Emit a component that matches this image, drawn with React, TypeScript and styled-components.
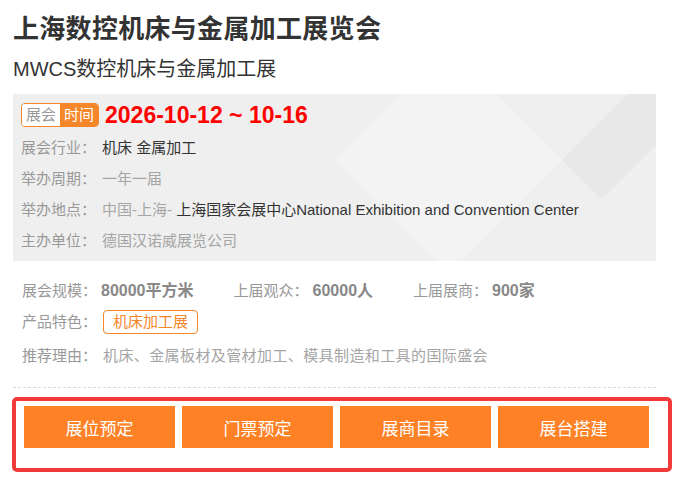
import styled, { createGlobalStyle } from "styled-components";

const GlobalStyle = createGlobalStyle`
  html, body {
    margin: 0;
    padding: 0;
    background: #fff;
  }
  body {
    font-family: "Liberation Sans", "Noto Sans CJK SC", sans-serif;
    color: #333;
  }
`;

const Page = styled.div`
  width: 673px;
  box-sizing: border-box;
  padding: 11px 17px 0 13px;
`;

const Title = styled.h1`
  margin: 0;
  font-size: 26px;
  line-height: 36px;
  font-weight: bold;
  letter-spacing: 0.3px;
  color: #333;
`;

const SubTitle = styled.h2`
  margin: 4px 0 0;
  font-size: 20px;
  line-height: 36px;
  font-weight: normal;
  color: #333;
`;

const InfoBox = styled.div`
  position: relative;
  overflow: hidden;
  margin-top: 7px;
  height: 167px;
  box-sizing: border-box;
  padding: 9px 0 5px 8px;
  background: #efefef;

  /* decorative diamonds of the backdrop */
  &::before {
    content: "";
    position: absolute;
    left: 356px;
    top: -14px;
    width: 160px;
    height: 160px;
    background: #f3f3f3;
    transform: rotate(45deg);
  }

  &::after {
    content: "";
    position: absolute;
    left: 549px;
    top: 66px;
    width: 180px;
    height: 56px;
    background: #e8e8e8;
    transform-origin: 0 0;
    transform: rotate(-45deg);
  }
`;

const DateRow = styled.div`
  position: relative;
  z-index: 1;
  display: flex;
  align-items: center;
  gap: 6px;
  height: 24px;
  margin-bottom: 5px;
`;

const Badge = styled.div`
  display: flex;
  height: 24px;
  box-sizing: border-box;
  border: 1px solid #f5862a;
  border-radius: 4px;
  overflow: hidden;
  font-size: 15px;
  line-height: 22px;
`;

const BadgePart = styled.span<{ $filled?: boolean }>`
  padding: 0 4px;
  background: ${(p) => (p.$filled ? "#f5862a" : "#fff")};
  color: ${(p) => (p.$filled ? "#fff" : "#999")};
`;

const DateText = styled.span`
  color: #ff0000;
  font-size: 23px;
  font-weight: bold;
  line-height: 24px;
`;

const Row = styled.div`
  position: relative;
  z-index: 1;
  height: 31px;
  line-height: 31px;
  font-size: 15px;
  white-space: nowrap;
`;

const Label = styled.span`
  display: inline-block;
  color: #999;
  margin-right: 6px;
`;

const Value = styled.span<{ $dark?: boolean }>`
  color: ${(p) => (p.$dark ? "#333" : "#a5a5a5")};
`;

const Details = styled.div`
  padding: 14px 0 0 9px;
`;

const Stat = styled.span`
  display: inline-block;
  margin-right: 40px;
`;

const StatLabel = styled(Label)`
  margin-right: 4px;
`;

const StatValue = styled.span`
  font-size: 16px;
  font-weight: bold;
  color: #888;
`;

const Tag = styled.span`
  display: inline-block;
  height: 24px;
  box-sizing: border-box;
  padding: 0 9px;
  border: 1px solid #f5862a;
  border-radius: 4px;
  color: #f5862a;
  font-size: 15px;
  line-height: 22px;
`;

const TagRow = styled(Row)`
  display: flex;
  align-items: center;
`;

const ReasonRow = styled(Row)`
  margin-top: 3px;
`;

const ReasonText = styled(Value)`
  letter-spacing: 0.4px;
`;

const Divider = styled.hr`
  margin: 16px 0 0;
  border: none;
  border-top: 1px dashed #d9d9d9;
`;

const ActionBar = styled.div`
  display: flex;
  gap: 7px;
  width: 660px;
  height: 75px;
  box-sizing: border-box;
  margin: 9px 0 0 -1px;
  padding: 5px 0 0 8px;
  border: 4px solid #f33a3a;
  border-radius: 5px;
`;

const ActionButton = styled.button`
  width: 151px;
  height: 42px;
  border: none;
  padding: 0;
  background: #fe8126;
  color: #fff;
  font-family: "Liberation Sans", "Noto Sans CJK SC", sans-serif;
  font-size: 17px;
  cursor: pointer;
`;

const infoRows = [
  { label: "展会行业：", parts: [{ text: "机床 金属加工", dark: true }] },
  { label: "举办周期：", parts: [{ text: "一年一届", dark: false }] },
  {
    label: "举办地点：",
    parts: [
      { text: "中国-上海- ", dark: false },
      {
        text: "上海国家会展中心National Exhibition and Convention Center",
        dark: true,
      },
    ],
  },
  { label: "主办单位：", parts: [{ text: "德国汉诺威展览公司", dark: false }] },
];

const stats = [
  { label: "展会规模：", value: "80000平方米" },
  { label: "上届观众：", value: "60000人" },
  { label: "上届展商：", value: "900家" },
];

const actions = ["展位预定", "门票预定", "展商目录", "展台搭建"];

export default function App() {
  return (
    <Page>
      <GlobalStyle />
      <Title>上海数控机床与金属加工展览会</Title>
      <SubTitle>MWCS数控机床与金属加工展</SubTitle>
      <InfoBox>
        <DateRow>
          <Badge>
            <BadgePart>展会</BadgePart>
            <BadgePart $filled>时间</BadgePart>
          </Badge>
          <DateText>2026-10-12 ~ 10-16</DateText>
        </DateRow>
        {infoRows.map((row) => (
          <Row key={row.label}>
            <Label>{row.label}</Label>
            {row.parts.map((part) => (
              <Value key={part.text} $dark={part.dark}>
                {part.text}
              </Value>
            ))}
          </Row>
        ))}
      </InfoBox>
      <Details>
        <Row>
          {stats.map((s) => (
            <Stat key={s.label}>
              <StatLabel>{s.label}</StatLabel>
              <StatValue>{s.value}</StatValue>
            </Stat>
          ))}
        </Row>
        <TagRow>
          <Label>产品特色：</Label>
          <Tag>机床加工展</Tag>
        </TagRow>
        <ReasonRow>
          <Label>推荐理由：</Label>
          <ReasonText>机床、金属板材及管材加工、模具制造和工具的国际盛会</ReasonText>
        </ReasonRow>
      </Details>
      <Divider />
      <ActionBar>
        {actions.map((a) => (
          <ActionButton key={a}>{a}</ActionButton>
        ))}
      </ActionBar>
    </Page>
  );
}
